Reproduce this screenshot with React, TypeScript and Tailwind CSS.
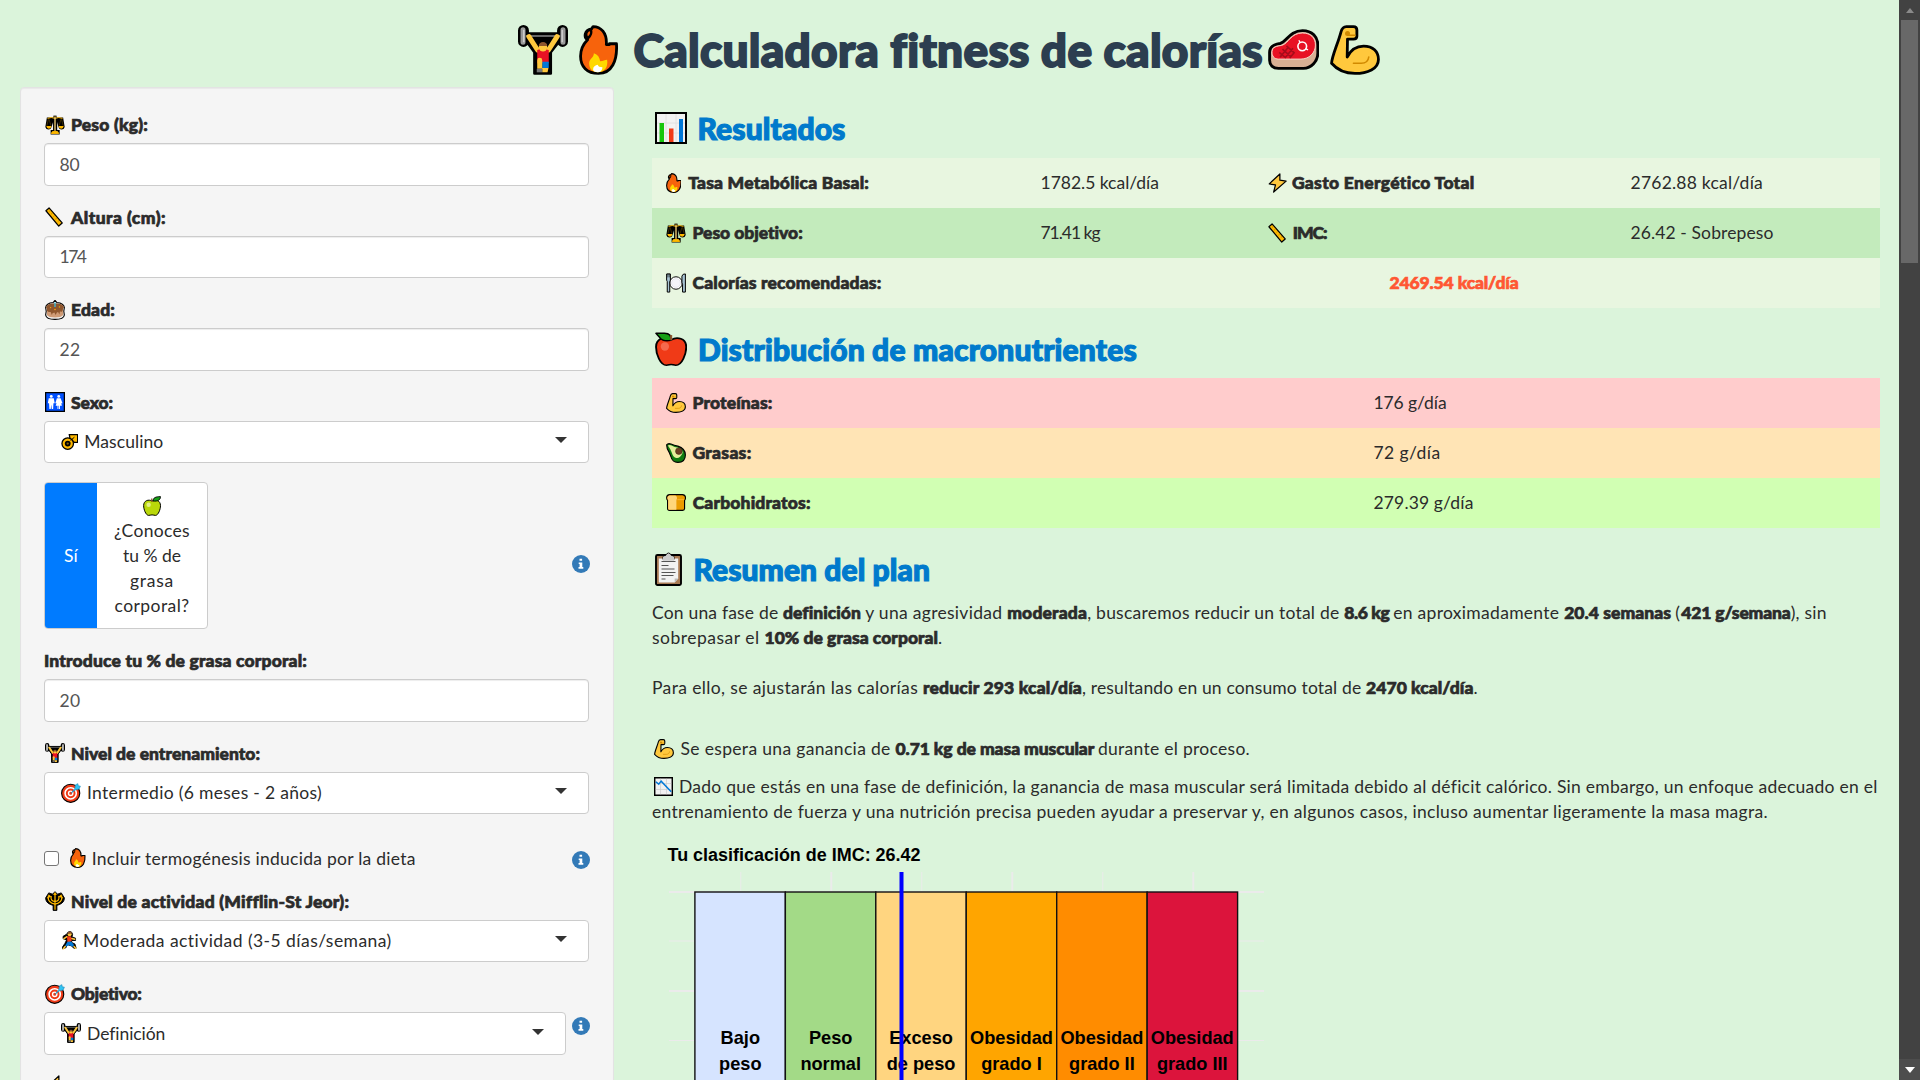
import React, { useLayoutEffect, useRef, useState } from "react";

type FitProps = { w: number; children: React.ReactNode; className?: string };

/* Single-line text whose letter spacing is adjusted so that it spans `w` pixels. */
function Fit({ w, children, className = "" }: FitProps) {
  const ref = useRef<HTMLSpanElement>(null);
  const [spacing, setSpacing] = useState(0);
  useLayoutEffect(() => {
    const el = ref.current;
    if (!el) return;
    el.style.letterSpacing = "0px";
    const natural = el.getBoundingClientRect().width;
    const count = (el.textContent || "x").length;
    const next = (w - natural) / count;
    el.style.letterSpacing = `${next}px`;
    setSpacing(next);
  }, [w]);
  return (
    <span ref={ref} className={`inline-block whitespace-pre ${className}`} style={{ letterSpacing: spacing }}>
      {children}
    </span>
  );
}

function Bold({ w, children }: FitProps) {
  return (
    <Fit w={w} className="font-black [-webkit-text-stroke:0.04em_currentColor] [stroke-linejoin:round]">
      {children}
    </Fit>
  );
}

const K = "#000";

type Drawing = { box: string; art: React.ReactNode };

const drawings: Record<string, Drawing> = {
  lifter: {
    box: "0 0 32 32",
    art: (
      <>
        <path d="M3.5 3.5v7M28.5 3.5v7" stroke={K} strokeWidth="7" strokeLinecap="round" />
        <path d="M4 5.5h24v3l-7 9v13.5h-10.500v-13.500L4 8.500z" fill={K} stroke={K} strokeWidth="1.600" strokeLinejoin="round" />
        <path d="M3.200 3v8M28.800 3v8" stroke="#999" strokeWidth="3.200" strokeLinecap="round" />
        <path d="M3.700 3v8M28.300 3v8" stroke="#ccc" strokeWidth="1" />
        <path d="M5 7h22" stroke="#888" strokeWidth="1" />
        <path d="M7 7.500l5.500 8.500M25 7.500l-5.500 8.500" stroke="#ffc83d" strokeWidth="3.200" strokeLinecap="round" />
        <path d="M12.300 16l3.200-1 4.200 1v8.500h-7.400z" fill="#e81224" />
        <circle cx="16" cy="14.200" r="2.700" fill="#ffc83d" />
        <path d="M13.300 13.500c0-3.500 5.400-3.500 5.400 0z" fill="#8e562e" />
        <path d="M15.500 23.500h4.200v4h-4.200z" fill="#0078d7" />
        <path d="M12.300 22.500q0-1.500 1.600-1.500t1.600 1.500v5.500h-3.200zM15.500 27.500h4l-.6 2.800h-3.400z" fill="#ffc83d" />
        <path d="M12 28h3.500v2.300h-3.500z" fill="#777" />
      </>
    ),
  },
  fire: {
    box: "0 0 25 32",
    art: (
      <>
        <path
          d="M9 1c5 0 9 4 8.500 11.500h2V12h4.500c.6 11-3 19-11.500 19C5 31 1 26.500 1 20c0-4.500 2-8 4.500-10.500C3 8 3.300 3.200 8 2.500z"
          fill="#f7630c"
          stroke={K}
          strokeWidth="1.800"
          strokeLinejoin="round"
        />
        <path d="M5.500 9.500C2.800 7.500 4 3 8 2.500 9.500 4.500 8 8 5.500 9.500z" fill={K} />
        <path d="M5.700 7.200c-.8-1.400 0-3 1.300-3.200.4 1.200-.3 2.500-1.300 3.200z" fill="#f7630c" />
        <path d="M6.500 24.500c0-3 3-3.500 3-6.500 2.500.8 3.800 2.700 4 5.200 2-.3 3-.9 4.500-1 .8 5-2 8-6 8-3.500 0-5.500-2.200-5.500-5.700z" fill="#ffd800" />
        <path d="M9 28.500c0-1.800 1.500-2.700 3-3 .4 1.200 1.200 1.500 3 1.500 0 2-1.200 3.200-3 3.200-1.600 0-3-.5-3-1.700z" fill="#fff" />
      </>
    ),
  },
  meat: {
    box: "0 0 32 25.500",
    art: (
      <>
        <path
          d="M1 14.500c0-4 3-5 6.500-5.500 4-.8 6-8 14-8 6 0 9.500 4 9.500 9v5c0 5-4 9.500-9 9.500H6.500C3 24.500 1 22.500 1 19.500z"
          fill="#d8b094"
          stroke={K}
          strokeWidth="1.800"
        />
        <path d="M2.500 14c.3-3 3-3.300 6-3.800C13 9 14 2.500 21.500 2.500c5 0 8 3 8 7.500 0 5-4 8.700-9 8.700H6.500c-2.500 0-4.200-1.700-4-4.700z" fill="#e81224" stroke="#f7d5c8" strokeWidth=".6" />
        <path d="M7 14.500l3.500 3M9 12.500l5 4.500M11.500 10.500l5 4.500M7.500 17.500l5-6M10.500 18l5-6M13.500 18l3-3.500" stroke="#a50d1a" strokeWidth="1" />
        <circle cx="21.300" cy="10.800" r="2.700" fill="none" stroke="#fff" strokeWidth="1" />
        <path d="M20 8.500l-.8-1.500M23.300 12.200l1.600.8" stroke="#fff" strokeWidth=".8" />
      </>
    ),
  },
  arm: {
    box: "0 0 32 32",
    art: (
      <>
        <path
          d="M7 4.500C7.500 2.500 8.500 1 10.500 1H15c1.500 0 2.200.8 2.200 2.200v4c0 1.200-1 1.800-2.200 1.800h-3.800l-.2 11.500c2-4 5-7 10.500-7 6 0 9.500 3.500 9.500 8.500 0 6-7 9-15 9-6.500 0-12-3-15-6.500C1.200 20 5 12 7 4.500z"
          fill="#ffc83d"
          stroke={K}
          strokeWidth="1.800"
          strokeLinejoin="round"
        />
        <circle cx="11.200" cy="5.400" r="1.600" fill="#d18900" />
        <path d="M11.500 6.500h4.500M15 24.500h5c2.500 0 4.500-1.300 4.800-4" fill="none" stroke="#d18900" strokeWidth="1" strokeLinecap="round" />
      </>
    ),
  },
  scales: {
    box: "0 0 32 32",
    art: (
      <>
        <path d="M3 4h26l2.500 15q-1 4-5 4t-5-4l-2-8v13h4v7H9v-7h4V11l-2.500 8q-1 4-5 4t-5-4z" fill={K} />
        <path d="M16 1v24" stroke={K} strokeWidth="5" />
        <path d="M16 2v24M4 5.500q6-3 12 0 6-3 12 0M10 29.500h12l-2-3h-8z" fill="none" stroke="#ffb900" strokeWidth="1.500" />
        <path d="M10 29.500h12l-2-3h-8z" fill="#ffb900" />
        <path d="M16 3v22" stroke="#fff" strokeWidth="1" />
        <path d="M2 17.500h8.500q-1 4.500-4.200 4.500T2 17.500zM21.500 17.500H30q-1 4.500-4.200 4.500t-4.300-4.500z" fill="#ffb900" />
        <path d="M5.500 7L3 17M6.500 7l3 10M25.500 7l-3 10M26.500 7l2.500 10" stroke="#886300" strokeWidth=".7" />
      </>
    ),
  },
  ruler: {
    box: "0 0 29 32",
    art: (
      <>
        <path d="M1.500 6L6.500 1.500 27.500 25.500 22 30.500z" fill="#ffb900" stroke={K} strokeWidth="2" strokeLinejoin="round" />
        <path d="M8.500 5.500l-2 1.700M12 9.500l-2.500 2.200M15.500 13.500l-2 1.700M19 17.500l-2.500 2.200M22.500 21.500l-2 1.700" stroke="#a87400" strokeWidth="1" />
      </>
    ),
  },
  cake: {
    box: "0 0 32 32",
    art: (
      <>
        <path d="M1 12Q2 5 13 4l3-3.500L19 4q11 1 12 8l-1 6 1 6q-1 7-15 7T1 24l1-6z" fill="#f2f2f2" stroke={K} strokeWidth="1.800" />
        <path d="M3 12h26v12q-3 4-13 4T3 24z" fill="#cf9b76" />
        <ellipse cx="16" cy="11.500" rx="14" ry="6.500" fill="#8e562e" />
        <path d="M3 13h26l-1 4-2 2-2-1-1 5-2-4-2 1-2 4-2-4-3 1-1 3-2-5-3 0-3-2z" fill="#8e562e" />
        <path d="M16 4v7" stroke="#32c8e8" strokeWidth="2" />
        <circle cx="9" cy="12" r="1" fill="#ffb900" />
        <circle cx="16" cy="15" r="1.200" fill="#ffb900" />
        <circle cx="23" cy="11" r="1" fill="#ffb900" />
      </>
    ),
  },
  restroom: {
    box: "0 0 32 32",
    art: (
      <>
        <path d="M1 1h30v30H1z" fill="#0050ff" stroke={K} strokeWidth="2" />
        <circle cx="10" cy="7" r="2.300" fill="#fff" />
        <circle cx="22" cy="7" r="2.300" fill="#fff" />
        <path d="M6 10h8l1.500 8h-2l-.5 9h-2.200l-.8-7-.8 7H7l-.5-9h-2z" fill="#fff" />
        <path d="M19 10h6l3 8h-2l1 4h-3v5h-1.500v-5h-1v5H20v-5h-3l1.500-4h-2z" fill="#fff" />
      </>
    ),
  },
  male: {
    box: "0 0 27 25",
    art: (
      <>
        <path d="M13 1h13v12h-5.500L18 10.500 14 7z" fill="#ffb900" stroke={K} strokeWidth="2" />
        <circle cx="10.500" cy="15" r="9" fill="#ffb900" stroke={K} strokeWidth="2" />
        <circle cx="10.500" cy="15" r="4.500" fill={K} />
        <circle cx="10.500" cy="15" r="1.800" fill="#886300" />
        <path d="M15 10l6-5" stroke={K} strokeWidth="1.500" />
      </>
    ),
  },
  greenApple: {
    box: "0 0 29 32",
    art: (
      <>
        <path d="M14.500 8C20 5 28 7 28 15.500 28 21 24.500 31 20 31c-2 0-3-.8-5.500-.8S11 31 9 31C4.500 31 1 21 1 15.500 1 7 9 5 14.500 8z" fill="#bad80a" stroke={K} strokeWidth="1.600" />
        <path d="M16 8c0-5 4-7 12-7 0 5-4 8-12 7z" fill="#16a016" stroke={K} strokeWidth="1.500" />
        <path d="M14 9V4" stroke="#8e562e" strokeWidth="2" />
        <circle cx="9" cy="14" r="3.500" fill="#e4f087" />
      </>
    ),
  },
  redApple: {
    box: "0 0 37 40",
    art: (
      <g transform="scale(1.190 1)">
        <path d="M15.500 9C21 5 30 7 30 17c0 8-4 21-10 21-2 0-3-.8-4.500-.8S13 38 11 38C5 38 1 25 1 17 1 7 10 5 15.500 9z" fill="#f03a17" stroke={K} strokeWidth="1.800" />
        <path d="M1 1.500h8c5 0 7 3 6 8-6 1.500-10-1-11-4z" fill="#16a016" stroke={K} strokeWidth="1.600" strokeLinejoin="round" />
        <path d="M15.500 3.500v6" stroke="#8e562e" strokeWidth="2" />
        <ellipse cx="9.500" cy="16.500" rx="4" ry="4.800" fill="#f5694d" />
      </g>
    ),
  },
  target: {
    box: "0 0 32 32",
    art: (
      <>
        <circle cx="15.500" cy="16.500" r="14.500" fill="#f03a17" stroke={K} strokeWidth="1.800" />
        <circle cx="15.500" cy="16.500" r="9" fill="none" stroke="#fff" strokeWidth="2.500" />
        <circle cx="15.500" cy="16.500" r="3.500" fill="none" stroke="#fff" strokeWidth="2.200" />
        <path d="M16 16.500L22 9l1-6 4-2 .5 3.500L31 5l-2 4.500-6 1.500z" fill="#31c4f3" stroke="#1b86b8" strokeWidth="1" />
      </>
    ),
  },
  trident: {
    box: "0 0 32 32",
    art: (
      <>
        <path d="M16 1l4 4 6-2 5 8q0 8-9 11l-3 1v8h-6v-8l-3-1q-9-3-9-11l5-8 6 2z" fill={K} stroke={K} strokeWidth="1.500" strokeLinejoin="round" />
        <path d="M16 4v26M10 8q-2 8 6 9 8-1 6-9" fill="none" stroke="#ffb900" strokeWidth="2" />
        <path d="M16 1.500l3 5h-6zM6 5l4 4-7 3zM26 5l-4 4 7 3z" fill="#ffb900" />
        <path d="M5 10q0 9 11 11 11-2 11-11" fill="none" stroke="#ffb900" strokeWidth="2" />
      </>
    ),
  },
  runner: {
    box: "0 0 27 32",
    art: (
      <>
        <path d="M10 5q1-4 5-4t4.500 5l-1 4 6 2v4h-6l-1 3 6 3 2 7h-4l-4-4-7-2-2 5-6 2v-3l4-6 3-6-6-2V9z" fill={K} stroke={K} strokeWidth="1.500" strokeLinejoin="round" />
        <circle cx="14.500" cy="5.500" r="3.300" fill="#ffc83d" />
        <path d="M11 5q0-4 4-4t3 3z" fill="#8e562e" />
        <path d="M5 13l5-3.500M18 12.500l5 1.500" stroke="#ffc83d" strokeWidth="2.500" strokeLinecap="round" />
        <path d="M10 9h7l1 8-7 3z" fill="#f03a17" />
        <path d="M11 18l6-.5 5 6-2 3-7-3-4 3-2-2z" fill="#0078d7" />
        <path d="M7 26l-3 4M22 26l2.500 3" stroke="#ffc83d" strokeWidth="2.500" strokeLinecap="round" />
      </>
    ),
  },
  bars: {
    box: "0 0 32 32",
    art: (
      <>
        <path d="M1 1h30v30H1z" fill="#f2f2f2" stroke={K} strokeWidth="2" />
        <path d="M11 2v28M21 2v28M2 11h28M2 21h28" stroke="#ddd" strokeWidth=".8" />
        <path d="M4.500 11h4.500v19H4.500z" fill="#16c60c" />
        <path d="M14 16.500h4.500V30H14z" fill="#f03a17" />
        <path d="M24 7h4v23h-4z" fill="#0078d7" />
      </>
    ),
  },
  chartDown: {
    box: "0 0 32 32",
    art: (
      <>
        <path d="M1.200 1.200h29.600v29.600H1.200z" fill="#f2f2f2" stroke={K} strokeWidth="2.400" />
        <path d="M11 3v26M21 3v26M3 11h26M3 21h26" stroke="#ccc" strokeWidth="1.200" />
        <path d="M3 8l5 4 4-5 17 18" fill="none" stroke="#0078d7" strokeWidth="2.400" />
      </>
    ),
  },
  bolt: {
    box: "0 0 31 32",
    art: <path d="M19 1.500L2 17.500l10 1.500L9 30.500l20-17.500-10-1.500z" fill="#ffc83d" stroke={K} strokeWidth="2" strokeLinejoin="round" />,
  },
  plate: {
    box: "0 0 32 32",
    art: (
      <>
        <circle cx="16" cy="16" r="10" fill="#fff" stroke={K} strokeWidth="1.500" />
        <circle cx="16" cy="16" r="7" fill="#f5f5fa" stroke="#d5d5e0" strokeWidth=".8" />
        <path d="M1 1.500h6v10l-1 2v17H2v-17l-1-2z" fill="#a8c4d4" stroke={K} strokeWidth="1.600" />
        <path d="M31 30.500h-4.500V18l-1-2V5q1-4 5.500-3.500z" fill="#a8c4d4" stroke={K} strokeWidth="1.600" />
        <path d="M3 1v6M5.200 1v6" stroke={K} strokeWidth=".9" />
      </>
    ),
  },
  avocado: {
    box: "0 0 32 32",
    art: (
      <>
        <path d="M1 3Q3 0 8 1.500q5 2.500 11 3.500 12 4 12 14 0 12-12 12-9 0-11-9Q5 14 2 9z" fill="#107c10" stroke={K} strokeWidth="1.800" />
        <path d="M3 4q3-2 6 0 5 3 9 3 9 3 8.500 9-4 9-10 8-5-1-7-8Q7 9 3 4z" fill="#e4ee9a" />
        <circle cx="20.500" cy="13" r="5.200" fill="#6b3f22" stroke="#4a2a15" />
      </>
    ),
  },
  bread: {
    box: "0 0 32 27",
    art: (
      <>
        <path d="M6 1h20q5 .5 5 5 0 2.500-1.500 4v13q0 3-3 3h-21q-3 0-3-3V10Q1 8.500 1 6q0-4.500 5-5z" fill="#eb9c00" stroke={K} strokeWidth="1.800" />
        <path d="M5.500 2.500H15q2.500 1 2.500 4l-1 4v14.500H5q-1.500 0-1.500-2V10Q2.300 8 2.300 6q.2-3 3.200-3.500z" fill="#ffd67a" />
        <path d="M18 9h11" stroke="#ffb52e" strokeWidth="1.500" />
      </>
    ),
  },
  clipboard: {
    box: "0 0 27 34",
    art: (
      <>
        <rect x="1" y="3" width="25" height="30" rx="1.500" fill="#a97b55" stroke={K} strokeWidth="1.900" />
        <path d="M3.800 6.500h19.400v20l-3.500 4H3.800z" fill="#f2f2f2" />
        <path d="M19.700 30.500v-4h3.500z" fill="#bbb" />
        <path d="M8 7.500V4.500l3-1q.5-2.500 2.500-2.500T16 3.500l3 1v3z" fill="#ccc" stroke={K} strokeWidth=".9" />
        <path d="M8 4.800l3-1q.5-2 2.500-2T16 3.800l3 1v4H8z" fill="#ccc" />
        <path d="M6.500 9.500h14M6.500 13.500h7M6.500 17h13M6.500 20.500h14M6.500 23.500h12M6.500 27h4" stroke="#555" strokeWidth="1.100" />
      </>
    ),
  },
};

function Emoji({ name, className = "h-5" }: { name: string; className?: string }) {
  const d = drawings[name];
  return (
    <svg viewBox={d.box} className={`w-auto shrink-0 ${className}`} fill="none">
      {d.art}
    </svg>
  );
}

function Info({ className = "" }: { className?: string }) {
  return (
    <svg viewBox="0 0 18 18" className={`-mr-px h-[18px] w-[18px] shrink-0 ${className}`}>
      <circle cx="9" cy="9" r="9" fill="#337ab7" />
      <path d="M7.500 3.700h2.600v2H7.500zM6.700 7.400h3.600v4.600h1v1.700H6.500V12h1.100V9.100h-.9z" fill="#fff" />
    </svg>
  );
}

function Label({ icon, w, children }: { icon?: string; w: number; children: string }) {
  return (
    <div className="mb-[5px] flex h-[25px] items-center pb-[1.500px]">
      {icon && (
        <span className="flex w-[27px] shrink-0 pl-px">
          <Emoji name={icon} />
        </span>
      )}
      <Bold w={w}>{children}</Bold>
    </div>
  );
}

function NumberField({ value, w }: { value: string; w: number }) {
  return (
    <div className="mb-5 flex h-[42.5px] w-[545px] items-center rounded border border-[#ccc] bg-white pl-[14.500px] text-[#555] shadow-[inset_0_1px_1px_rgba(0,0,0,0.075)]">
      <Fit w={w}>{value}</Fit>
    </div>
  );
}

function Select({ icon, size = "h-5", w, children, width = "w-[545px]", gap = "gap-[6px]" }: { icon: string; size?: string; w: number; children: string; width?: string; gap?: string }) {
  return (
    <div className={`mb-5 flex h-[42.5px] items-center rounded border border-[#ccc] bg-white pr-[21px] pl-4 ${width} ${gap}`}>
      <Emoji name={icon} className={size} />
      <Fit w={w}>{children}</Fit>
      <span className="mb-[3px] ml-auto h-0 w-0 border-x-[6px] border-t-[6px] border-x-transparent border-t-[#333]" />
    </div>
  );
}

function Sidebar() {
  return (
    <aside className="h-[1000px] w-[594px] shrink-0 rounded border border-[#e3e3e3] bg-[#f5f5f5] px-[23.500px] pt-[25px] shadow-[inset_0_1px_1px_rgba(0,0,0,0.05)]">
      <Label icon="scales" w={77}>Peso (kg):</Label>
      <NumberField value="80" w={20} />
      <Label icon="ruler" w={95}>Altura (cm):</Label>
      <NumberField value="174" w={26} />
      <Label icon="cake" w={44}>Edad:</Label>
      <NumberField value="22" w={21} />
      <Label icon="restroom" w={42}>Sexo:</Label>
      <Select icon="male" size="h-4" w={79}>Masculino</Select>
      <div className="-mt-px flex h-[147px] items-center justify-between">
        <div className="flex h-[147px] w-[164px] overflow-hidden rounded border border-[#ccc] bg-white">
          <div className="flex w-[52px] items-center justify-center bg-[#007bff] text-white">
            <Fit w={14}>Sí</Fit>
          </div>
          <div className="flex grow flex-col items-center pt-[10px] leading-[25px]">
            <span className="flex h-[25px] items-center">
              <Emoji name="greenApple" />
            </span>
            <Fit w={76}>¿Conoces</Fit>
            <Fit w={58}>tu % de</Fit>
            <Fit w={44}>grasa</Fit>
            <Fit w={75}>corporal?</Fit>
          </div>
        </div>
        <Info className="mt-[17px]" />
      </div>
      <div className="h-5" />
      <Label w={263}>Introduce tu % de grasa corporal:</Label>
      <NumberField value="20" w={21} />
      <Label icon="lifter" w={189}>Nivel de entrenamiento:</Label>
      <Select icon="target" w={235}>Intermedio (6 meses - 2 años)</Select>
      <div className="mt-[31.500px] mb-[19px] flex h-[25px] items-center">
        <span className="h-[15px] w-[15px] rounded-[3px] border border-[#767676] bg-white" />
        <Emoji name="fire" className="ml-[11px] h-5" />
        <Fit w={324} className="ml-[6px]">Incluir termogénesis inducida por la dieta</Fit>
        <Info className="mt-[3px] ml-auto" />
      </div>
      <Label icon="trident" w={278}>Nivel de actividad (Mifflin-St Jeor):</Label>
      <Select icon="runner" size="h-[19px]" w={309}>Moderada actividad (3-5 días/semana)</Select>
      <Label icon="target" w={71}>Objetivo:</Label>
      <div className="flex justify-between">
        <Select icon="lifter" w={78} width="w-[521.500px]">Definición</Select>
        <Info className="mt-[5px]" />
      </div>
      <div className="flex pl-[3px]">
        <Emoji name="bolt" />
      </div>
    </aside>
  );
}

function Heading({ icon, size, w, gap, children }: { icon: string; size: string; w: number; gap: string; children: string }) {
  return (
    <h2 className={`flex h-10 items-center pl-[2.500px] text-[30px] leading-10 text-[#007acc] ${gap}`}>
      <Emoji name={icon} className={size} />
      <Bold w={w}>{children}</Bold>
    </h2>
  );
}

function Cell({ icon, size = "h-5", gap = "gap-[7px]", w, children }: { icon: string; size?: string; gap?: string; w: number; children: string }) {
  return (
    <div className={`flex items-center pb-px pl-[13.500px] ${gap}`}>
      <Emoji name={icon} className={size} />
      <Bold w={w}>{children}</Bold>
    </div>
  );
}

function Value({ w, children }: { w: number; children: string }) {
  return (
    <div className="flex items-center pb-px pl-[12.500px]">
      <Fit w={w}>{children}</Fit>
    </div>
  );
}

const categories = [
  { color: "#d6e4ff", top: "Bajo", bottom: "peso" },
  { color: "#a3da87", top: "Peso", bottom: "normal" },
  { color: "#ffd580", top: "Exceso", bottom: "de peso" },
  { color: "#ffa500", top: "Obesidad", bottom: "grado I" },
  { color: "#ff8c00", top: "Obesidad", bottom: "grado II" },
  { color: "#dc143c", top: "Obesidad", bottom: "grado III" },
];

function Chart() {
  return (
    <svg viewBox="652 840 628 240" className="mt-[16px] block h-[240px] w-[628px] font-['Liberation_Sans',sans-serif] font-bold">
      <text x="667.500" y="861" fontSize="18" textLength="253" lengthAdjust="spacingAndGlyphs">Tu clasificación de IMC: 26.42</text>
      {[892, 991].map((y) => (
        <path key={y} d={`M669 ${y}H1264`} stroke="#ebebeb" strokeWidth="2" />
      ))}
      {[941, 1040.500].map((y) => (
        <path key={y} d={`M669 ${y}H1264`} stroke="#ebebeb" strokeWidth="1" />
      ))}
      {categories.map((c, i) => (
        <g key={i}>
          <path d={`M${740.800 + i * 90.500} 872V1080`} stroke="#ebebeb" strokeWidth={i % 2 ? 2 : 1} />
          <rect x={694.900 + i * 90.450} y="892" width="90.450" height="220" fill={c.color} stroke="#111" strokeWidth="1.400" />
        </g>
      ))}
      {categories.map((c, i) => (
        <g key={i} fontSize="18.200" textAnchor="middle">
          <text x={740.300 + i * 90.400} y="1044">{c.top}</text>
          <text x={740.300 + i * 90.400} y="1070">{c.bottom}</text>
        </g>
      ))}
      <path d="M901.500 872V1080" stroke="#0000ff" strokeWidth="4" />
    </svg>
  );
}

function Results() {
  return (
    <main className="ml-[38.500px] w-[1228px] shrink-0 pt-[21px]">
      <Heading icon="bars" size="h-8" w={148} gap="gap-[11px]">Resultados</Heading>
      <div className="mt-[10px] grid h-[150px] grid-cols-[376px_226px_364px_262px] grid-rows-3">
        <div className="col-span-4 grid grid-cols-subgrid bg-[#e8f6e0]">
          <Cell icon="fire" gap="gap-[7px]" w={181}>Tasa Metabólica Basal:</Cell>
          <Value w={118.500}>1782.5 kcal/día</Value>
          <Cell icon="bolt" gap="gap-[5px]" w={183}>Gasto Energético Total</Cell>
          <Value w={132.500}>2762.88 kcal/día</Value>
        </div>
        <div className="col-span-4 grid grid-cols-subgrid bg-[#c3ebbc]">
          <Cell icon="scales" w={110.500}>Peso objetivo:</Cell>
          <Value w={59}>71.41 kg</Value>
          <Cell icon="ruler" w={34}>IMC:</Cell>
          <Value w={143}>26.42 - Sobrepeso</Value>
        </div>
        <div className="col-span-4 grid grid-cols-subgrid bg-[#e8f6e0]">
          <Cell icon="plate" w={189}>Calorías recomendadas:</Cell>
          <div className="col-span-3 flex items-center justify-center pb-px text-[#ff5733]">
            <Bold w={129}>2469.54 kcal/día</Bold>
          </div>
        </div>
      </div>
      <div className="h-[21px]" />
      <Heading icon="redApple" size="h-[35px]" w={439} gap="gap-[11px]">Distribución de macronutrientes</Heading>
      <div className="mt-[9px] grid h-[150px] grid-cols-[709px_519px] grid-rows-3">
        <div className="col-span-2 grid grid-cols-subgrid bg-[#ffcccc]">
          <Cell icon="arm" w={80}>Proteínas:</Cell>
          <Value w={73}>176 g/día</Value>
        </div>
        <div className="col-span-2 grid grid-cols-subgrid bg-[#ffe4b5]">
          <Cell icon="avocado" w={59}>Grasas:</Cell>
          <Value w={67}>72 g/día</Value>
        </div>
        <div className="col-span-2 grid grid-cols-subgrid bg-[#d1ffb3]">
          <Cell icon="bread" size="h-[17px]" w={118}>Carbohidratos:</Cell>
          <Value w={100}>279.39 g/día</Value>
        </div>
      </div>
      <div className="h-[21px]" />
      <Heading icon="clipboard" size="h-[34px]" w={236.500} gap="gap-[12px]">Resumen del plan</Heading>
      <div className="mt-[10.500px] flex flex-col leading-[25px] whitespace-nowrap">
        <div className="flex">
          <Fit w={131}>{"Con una fase de "}</Fit>
          <Bold w={82}>{"definición "}</Bold>
          <Fit w={142}>{"y una agresividad "}</Fit>
          <Bold w={80}>moderada</Bold>
          <Fit w={257}>{", buscaremos reducir un total de "}</Fit>
          <Bold w={49}>{"8.6 kg "}</Bold>
          <Fit w={171}>{"en aproximadamente "}</Fit>
          <Bold w={111}>{"20.4 semanas "}</Bold>
          <Fit w={6}>(</Fit>
          <Bold w={109.500}>421 g/semana</Bold>
          <Fit w={36}>), sin</Fit>
        </div>
        <div className="flex">
          <Fit w={112.500}>{"sobrepasar el "}</Fit>
          <Bold w={173.500}>10% de grasa corporal</Bold>
          <span>.</span>
        </div>
        <div className="mt-[25px] flex">
          <Fit w={271}>{"Para ello, se ajustarán las calorías "}</Fit>
          <Bold w={159}>reducir 293 kcal/día</Bold>
          <Fit w={284}>{", resultando en un consumo total de "}</Fit>
          <Bold w={107.500}>2470 kcal/día</Bold>
          <span>.</span>
        </div>
        <div className="mt-[36.500px] flex items-center gap-[7px] pl-[1.500px]">
          <Emoji name="arm" />
          <div className="flex">
            <Fit w={215}>{"Se espera una ganancia de "}</Fit>
            <Bold w={202.500}>{"0.71 kg de masa muscular "}</Bold>
            <Fit w={152}>durante el proceso.</Fit>
          </div>
        </div>
        <div className="mt-[13px] flex items-center gap-[6.500px] pl-[1.500px]">
          <Emoji name="chartDown" className="h-[19px]" />
          <Fit w={1198}>Dado que estás en una fase de definición, la ganancia de masa muscular será limitada debido al déficit calórico. Sin embargo, un enfoque adecuado en el</Fit>
        </div>
        <div className="flex">
          <Fit w={1116}>entrenamiento de fuerza y una nutrición precisa pueden ayudar a preservar y, en algunos casos, incluso aumentar ligeramente la masa magra.</Fit>
        </div>
      </div>
      <Chart />
    </main>
  );
}

function Scrollbar() {
  return (
    <div className="flex h-[1080px] w-[21px] shrink-0 flex-col items-center bg-[#424242]">
      <div className="flex h-[20px] w-full items-center justify-center">
        <span className="h-0 w-0 border-x-[4px] border-b-[5px] border-x-transparent border-b-[#8a8a8a]" />
      </div>
      <div className="h-[243px] w-[17px] bg-[#686868]" />
      <div className="mt-auto flex h-[21px] w-full items-center justify-center bg-[#4d4d4d]">
        <span className="h-0 w-0 border-x-[5px] border-t-[6px] border-x-transparent border-t-white" />
      </div>
    </div>
  );
}

export default function App() {
  return (
    <div className="flex h-[1080px] w-[1920px] overflow-hidden bg-[#dbf4db] font-['Lato',sans-serif] text-[17.500px] leading-[25px] text-[#2b2b2b]">
      <div className="flex w-[1899px] flex-col">
        <header className="flex h-[87px] shrink-0 items-start pt-[25px] pl-[518px]">
          <Emoji name="lifter" className="h-[50px]" />
          <Emoji name="fire" className="ml-[11px] h-[50px]" />
          <h1 className="ml-[15.500px] text-[46px] leading-[50px] text-[#2c3e50]">
            <Bold w={629}>Calculadora fitness de calorías</Bold>
          </h1>
          <Emoji name="meat" className="mt-[4px] ml-[5px] h-[41px]" />
          <Emoji name="arm" className="ml-[11px] h-[50px]" />
        </header>
        <div className="flex pl-[19.500px]">
          <Sidebar />
          <Results />
        </div>
      </div>
      <Scrollbar />
    </div>
  );
}
